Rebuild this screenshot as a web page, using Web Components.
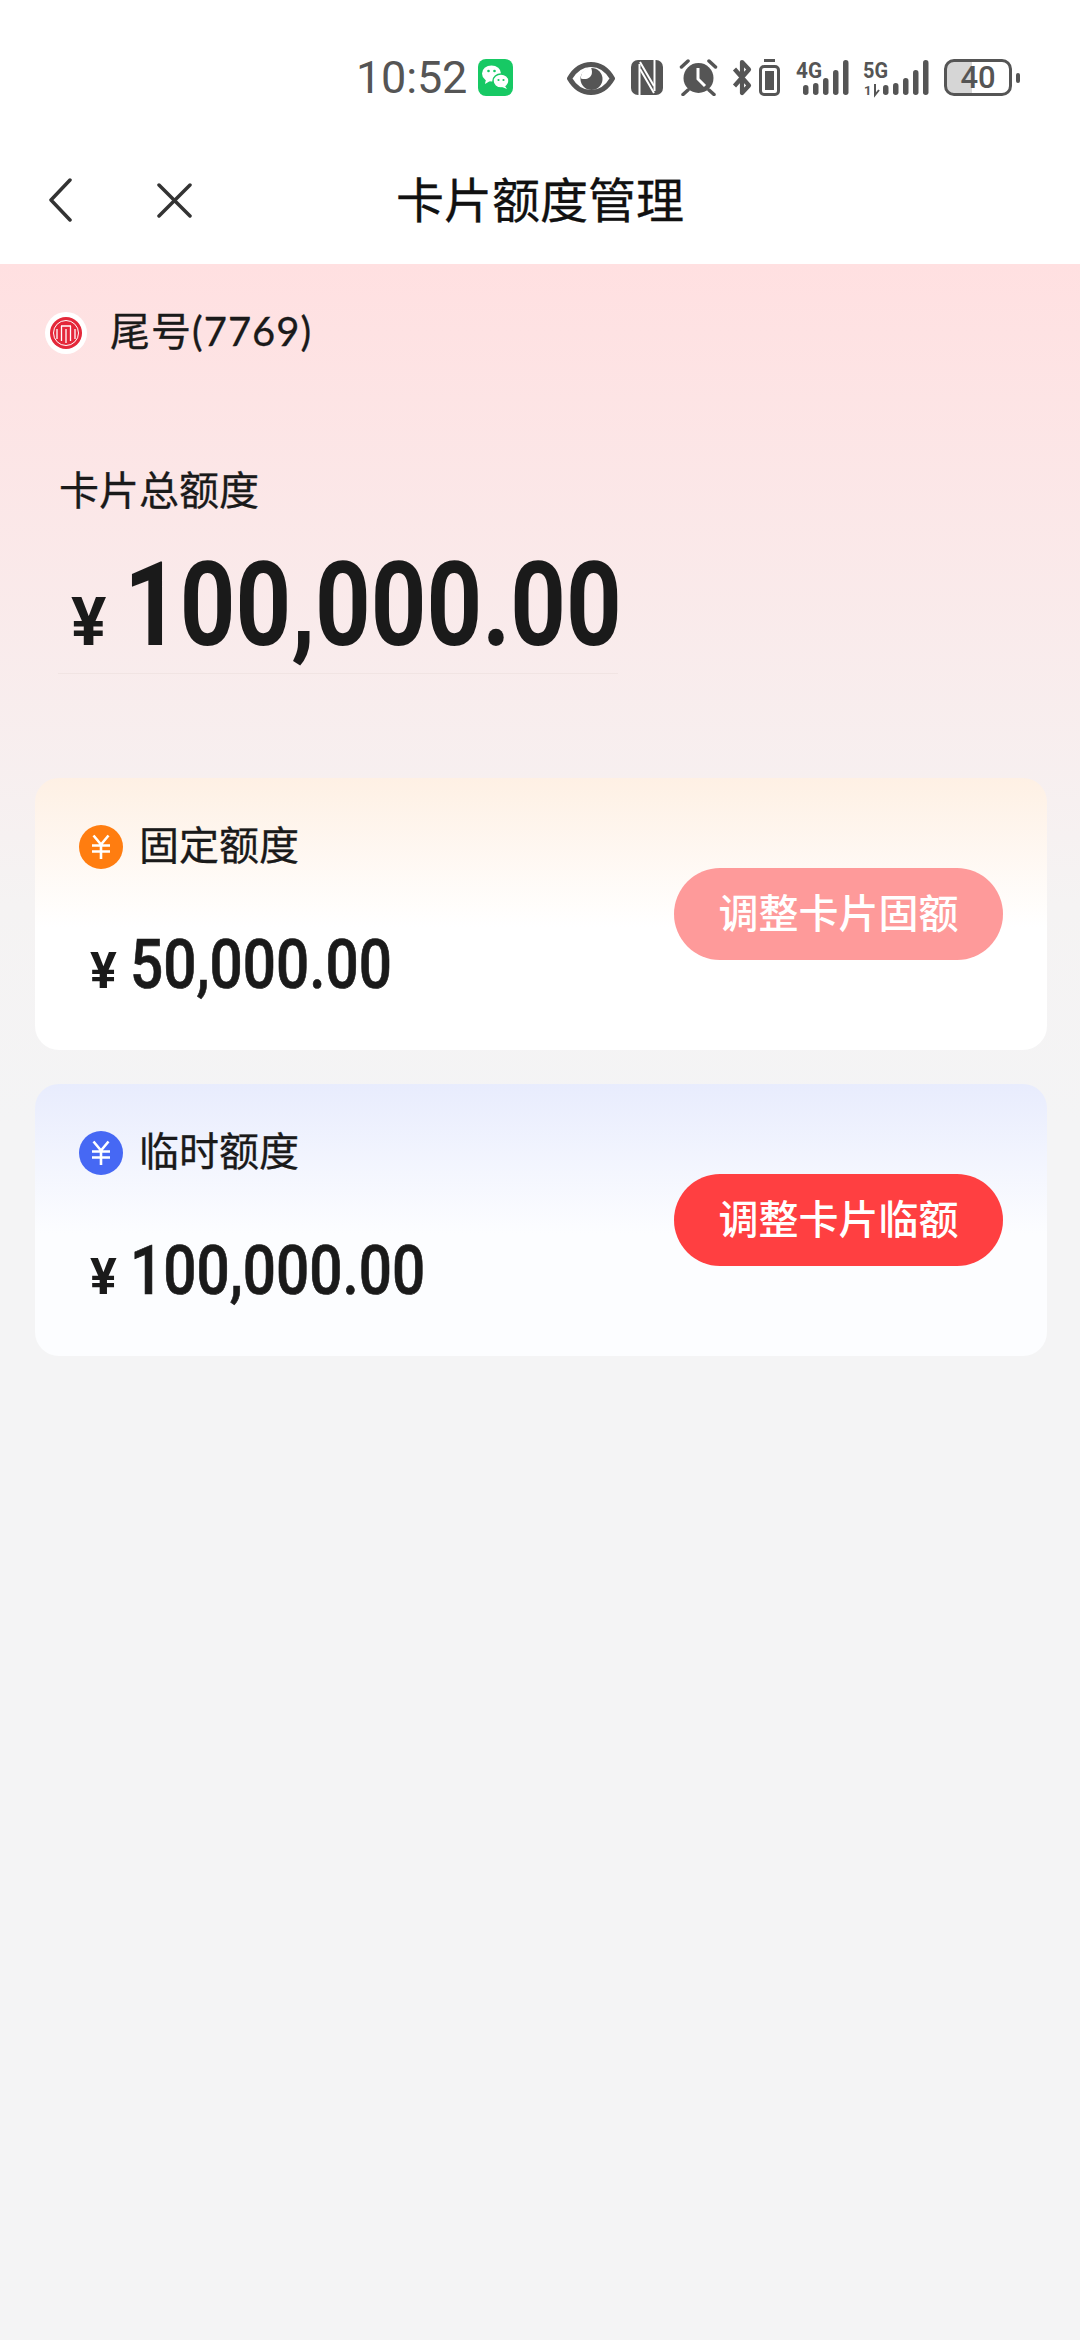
<!DOCTYPE html>
<html lang="zh">
<head>
<meta charset="utf-8">
<title>卡片额度管理</title>
<style>
  html, body { margin: 0; padding: 0; }
  body { width: 1080px; height: 2340px; overflow: hidden; background: #f4f4f5; font-family: "Noto Sans CJK SC", sans-serif; }
  quota-page { display: block; }
</style>
</head>
<body>
<quota-page>
  <status-bar slot="top"></status-bar>
  <nav-bar slot="top">卡片额度管理</nav-bar>
  <card-tail>尾号(7769)</card-tail>
  <total-quota label="卡片总额度" amount="100,000.00"></total-quota>
  <quota-card tone="orange" label="固定额度" amount="50,000.00" action="调整卡片固额" faded></quota-card>
  <quota-card tone="blue" label="临时额度" amount="100,000.00" action="调整卡片临额"></quota-card>
</quota-page>

<script>
class QuotaPage extends HTMLElement {
  connectedCallback() {
    const root = this.attachShadow({mode: 'open'});
    root.innerHTML = `
      <style>
        :host { display: block; height: 2340px; background: #f4f4f5; }
        header { background: #fff; }
        main {
          display: flex; flex-direction: column;
          height: 2076px; box-sizing: border-box;
          background: linear-gradient(180deg, #ffe0e1 0, #f5f3f3 640px, #f4f4f5 860px);
        }
      </style>
      <header><slot name="top"></slot></header>
      <main><slot></slot></main>`;
  }
}

// bar positions are shared by the 4G and 5G signal icons
function signalBars(x) {
  const h = [10, 12, 17, 25, 35];
  return h.map((v, i) => `<rect x="${x + i * 10}" y="${39 - v}" width="5.500" height="${v}" rx="2.700"/>`).join('');
}

class StatusBar extends HTMLElement {
  connectedCallback() {
    const root = this.attachShadow({mode: 'open'});
    root.innerHTML = `
      <style>
        :host { display: flex; align-items: flex-start; height: 136px; box-sizing: border-box; padding: 59px 0 0 356px; color: #555; }
        .time { font: 400 45px/38px Roboto, sans-serif; width: 122px; letter-spacing: -.2px; }
        svg { display: block; flex: none; }
        .battery { width: 68px; height: 37px; margin-left: 15px; box-sizing: border-box; border: 3px solid #555; border-radius: 10px; overflow: hidden; background: linear-gradient(90deg, #d6d6d6 0 25px, #fff 25px); }
        .battery span { display: block; text-align: center; font: 500 31px/31px Roboto, sans-serif; }
      </style>
      <span class="time">10:52</span>
      <svg width="35" height="37" viewBox="0 0 35 37">
        <rect width="35" height="37" rx="8" fill="#17c964"/>
        <ellipse cx="13.500" cy="14.500" rx="9.500" ry="8" fill="#fff"/>
        <path d="M8 20l-1 5 5-3z" fill="#fff"/>
        <ellipse cx="23" cy="22" rx="8" ry="7" fill="#fff" stroke="#17c964" stroke-width="1.500"/>
        <path d="M27 27l2 3-5-2z" fill="#fff"/>
        <circle cx="10.500" cy="12" r="1.300" fill="#17c964"/><circle cx="16.500" cy="12" r="1.300" fill="#17c964"/>
        <circle cx="20.500" cy="21" r="1.100" fill="#17c964"/><circle cx="25.500" cy="21" r="1.100" fill="#17c964"/>
      </svg>
      <svg style="margin-left:54px;margin-top:3px" width="48" height="33" viewBox="0 0 48 33">
        <path d="M2.500 16.500C8 7 15 2.500 24 2.500s16 4.500 21.500 14C40 26 33 30.500 24 30.500S8 26 2.500 16.500z" fill="none" stroke="#555" stroke-width="5" stroke-linejoin="round"/>
        <circle cx="24.500" cy="17" r="11" fill="#555"/>
        <path d="M24 5.500c2 5 .5 8-1 9.500s-5 3-9 1.500c-.5-5 3-11 10-11z" fill="#fff"/>
      </svg>
      <svg style="margin-left:16px;margin-top:1px" width="32" height="35" viewBox="0 0 32 35">
        <rect width="32" height="35" rx="7" fill="#555"/>
        <path d="M8.500 4v31M23.500 0v31" stroke="#fff" stroke-width="2"/>
        <path d="M9 2l14 24M9 9l14 24" stroke="#fff" stroke-width="2" fill="none"/>
      </svg>
      <svg style="margin-left:16px" width="39" height="37" viewBox="0 0 39 37">
        <circle cx="19.500" cy="19" r="15" fill="#555"/>
        <path d="M19 9v11l7 7" fill="none" stroke="#fff" stroke-width="3"/>
        <path d="M2.500 8l6.500-6M36.500 8L30 2M9 31l-5 4.500M30 31l5 4.500" stroke="#555" stroke-width="3.500" stroke-linecap="round"/>
      </svg>
      <svg style="margin-left:14px" width="20" height="37" viewBox="0 0 20 37">
        <path d="M2.500 10L17 26.500 10 34V3l7 7.500L2.500 27" fill="none" stroke="#555" stroke-width="4.200" stroke-linejoin="round"/>
      </svg>
      <svg style="margin-left:7px" width="21" height="37" viewBox="0 0 21 37">
        <rect x="5" y="0" width="11" height="3" fill="#555"/>
        <rect x="1.500" y="7.500" width="18" height="28" rx="3.500" fill="none" stroke="#555" stroke-width="3"/>
        <rect x="6" y="12" width="9" height="19" fill="#555"/>
      </svg>
      <svg style="margin-left:16px;margin-top:-3px" width="54" height="44" viewBox="0 0 54 44">
        <text x="0" y="22" font-family="Roboto, sans-serif" font-weight="700" font-size="22" fill="#555" textLength="26" lengthAdjust="spacingAndGlyphs">4G</text>
        <g fill="#555">${signalBars(7)}</g>
      </svg>
      <svg style="margin-left:13px;margin-top:-3px" width="66" height="44" viewBox="0 0 66 44">
        <text x="0" y="22" font-family="Roboto, sans-serif" font-weight="700" font-size="22" fill="#555" textLength="25" lengthAdjust="spacingAndGlyphs">5G</text>
        <text x="1" y="39" font-family="Roboto, sans-serif" font-weight="700" font-size="13" fill="#555">1</text>
        <path d="M12 28v11l4-5" fill="none" stroke="#555" stroke-width="2"/>
        <g fill="#555">${signalBars(20)}</g>
      </svg>
      <div class="battery"><span>40</span></div>
      <svg style="margin-left:4px;margin-top:14px" width="4" height="10" viewBox="0 0 4 10"><rect width="4" height="10" rx="2" fill="#555"/></svg>`;
  }
}

class NavBar extends HTMLElement {
  connectedCallback() {
    const root = this.attachShadow({mode: 'open'});
    root.innerHTML = `
      <style>
        :host { display: grid; grid-template-columns: 1fr auto 1fr; align-items: center; height: 128px; padding: 0 48px; color: #111; }
        .left { display: flex; align-items: center; gap: 85px; }
        .title { font-size: 48px; line-height: 60px; font-weight: 400; -webkit-text-stroke: .3px #111; padding-bottom: 6px; }
        svg { display: block; }
      </style>
      <div class="left">
        <svg width="24" height="44" viewBox="0 0 24 44"><path d="M22 2L3 22l19 20" fill="none" stroke="#333" stroke-width="3.500" stroke-linecap="round" stroke-linejoin="round"/></svg>
        <svg width="35" height="35" viewBox="0 0 35 35"><path d="M2 2l31 31M33 2L2 33" fill="none" stroke="#333" stroke-width="3.500" stroke-linecap="round"/></svg>
      </div>
      <div class="title"><slot></slot></div>
      <div></div>`;
  }
}

class CardTail extends HTMLElement {
  connectedCallback() {
    const root = this.attachShadow({mode: 'open'});
    root.innerHTML = `
      <style>
        :host { display: flex; align-items: center; gap: 23px; height: 42px; margin: 48px 0 0 45px; color: #1a1a1a; font-size: 40px; -webkit-text-stroke: .3px #1a1a1a; }
        svg { display: block; flex: none; }
        span { font-family: Lato, "Noto Sans CJK SC", sans-serif; line-height: 42px; letter-spacing: 1px; padding-bottom: 4px; }
      </style>
      <svg width="42" height="42" viewBox="0 0 42 42">
        <circle cx="21" cy="21" r="21" fill="#fff"/>
        <circle cx="21" cy="21" r="16" fill="#e4283a"/>
        <circle cx="21" cy="21" r="12.500" fill="none" stroke="#fff" stroke-width="1"/>
        <path d="M12 27V17M16.500 29V14M25.500 29V14M30 27V17M21 31V17M16 14h10" fill="none" stroke="#fff" stroke-width="1.300"/>
      </svg>
      <span><slot></slot></span>`;
  }
}

class TotalQuota extends HTMLElement {
  connectedCallback() {
    const root = this.attachShadow({mode: 'open'});
    root.innerHTML = `
      <style>
        :host { display: block; margin: 112px 0 104px 58px; width: 560px; color: #1a1a1a; }
        .label { font-size: 40px; line-height: 44px; padding-left: 1px; -webkit-text-stroke: .3px #1a1a1a; }
        .amount { display: flex; align-items: baseline; height: 120px; margin-top: 35px; padding-left: 13px; padding-bottom: 8px; border-bottom: 1px solid #f1e4e3; }
        .cny { font: 700 66px/120px Roboto, sans-serif; width: 53px; flex: none; }
        .num { display: block; flex: none; font: 700 117px/120px Roboto, sans-serif; white-space: nowrap; transform: scaleX(.83); transform-origin: 0 50%; }
      </style>
      <div class="label"></div>
      <div class="amount"><span class="cny">¥</span><span class="num"></span></div>`;
    root.querySelector('.label').textContent = this.getAttribute('label');
    root.querySelector('.num').textContent = this.getAttribute('amount');
  }
}

const TONES = {
  orange: {dot: '#ff7d10', top: '#fef0e4', bottom: '#ffffff'},
  blue: {dot: '#4668f4', top: '#e8ecfd', bottom: '#fcfdff'}
};

class QuotaCard extends HTMLElement {
  connectedCallback() {
    const tone = TONES[this.getAttribute('tone')] || TONES.orange;
    const root = this.attachShadow({mode: 'open'});
    root.innerHTML = `
      <style>
        :host {
          display: flex; align-items: center; justify-content: space-between; flex: none;
          box-sizing: border-box; height: 272px; margin: 0 33px 34px 35px; padding: 0 44px;
          border-radius: 24px; color: #1a1a1a;
          background: linear-gradient(180deg, ${tone.top} 0, ${tone.bottom} 55%, ${tone.bottom} 100%);
        }
        .info { padding-bottom: 4px; }
        .head { display: flex; align-items: center; gap: 16px; height: 44px; font-size: 40px; -webkit-text-stroke: .3px #1a1a1a; }
        .label { margin-bottom: 8px; }
        .dot { display: block; flex: none; }
        .amount { display: flex; align-items: baseline; width: 400px; height: 70px; margin: 61px 0 0 11px; }
        .cny { font: 700 50px/70px Roboto, sans-serif; width: 40px; flex: none; }
        .num { display: block; flex: none; font: 500 68px/70px Roboto, sans-serif; -webkit-text-stroke: .7px #1a1a1a; white-space: nowrap; transform: scaleX(.86); transform-origin: 0 50%; }
        button {
          box-sizing: border-box; width: 329px; height: 92px; padding: 0 0 6px; border: 0; border-radius: 46px;
          background: #ff3f41; color: #fff; font: 500 40px/86px "Noto Sans CJK SC", sans-serif;
        }
        :host([faded]) button { background: #fe9a9a; }
      </style>
      <div class="info">
        <div class="head">
          <svg class="dot" width="44" height="44" viewBox="0 0 44 44">
            <circle cx="22" cy="22" r="22" fill="${tone.dot}"/>
            <path d="M14.500 10.500l7.500 9 7.500-9M13 20.500h18M13 26.500h18M22 19.500V34" fill="none" stroke="#fff" stroke-width="2.600"/>
          </svg>
          <span class="label"></span>
        </div>
        <div class="amount"><span class="cny">¥</span><span class="num"></span></div>
      </div>
      <button type="button"></button>`;
    root.querySelector('.label').textContent = this.getAttribute('label');
    root.querySelector('.num').textContent = this.getAttribute('amount');
    root.querySelector('button').textContent = this.getAttribute('action');
  }
}

customElements.define('quota-page', QuotaPage);
customElements.define('status-bar', StatusBar);
customElements.define('nav-bar', NavBar);
customElements.define('card-tail', CardTail);
customElements.define('total-quota', TotalQuota);
customElements.define('quota-card', QuotaCard);
</script>
</body>
</html>
